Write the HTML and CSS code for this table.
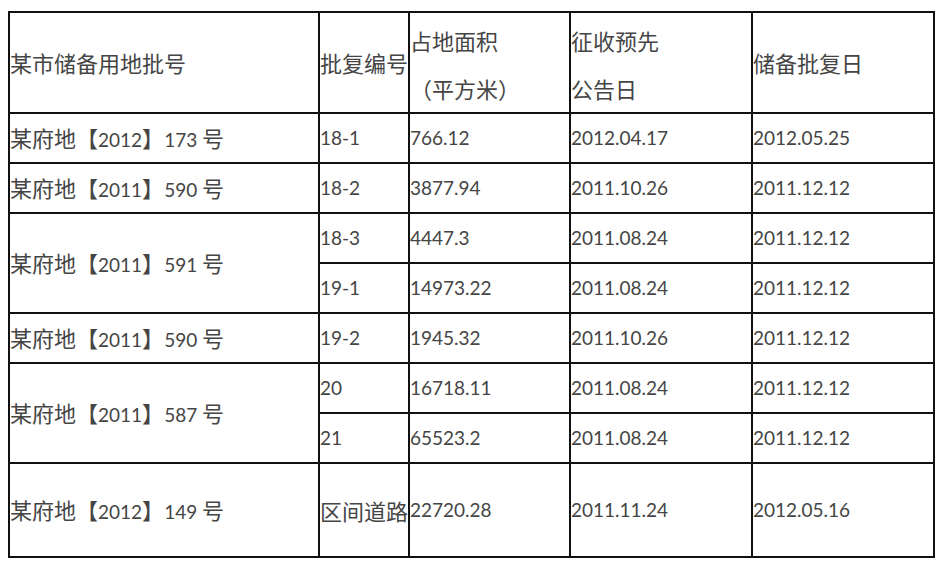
FILE: index.html
```html
<!DOCTYPE html>
<html lang="zh-CN">
<head>
<meta charset="utf-8">
<title>储备用地批复表</title>
<link rel="stylesheet" href="styles.css">
</head>
<body>
<table class="grid">
  <colgroup>
    <col class="c1"><col class="c2"><col class="c3"><col class="c4"><col class="c5">
  </colgroup>
  <tr class="head">
    <td>某市储备用地批号</td>
    <td>批复编号</td>
    <td class="two">占地面积<br>（平方米）</td>
    <td class="two">征收预先<br>公告日</td>
    <td>储备批复日</td>
  </tr>
  <tr class="r">
    <td>某府地【<span class="n">2012</span>】<span class="n">173 </span>号</td>
    <td class="num">18-1</td><td class="num">766.12</td><td class="num">2012.04.17</td><td class="num">2012.05.25</td>
  </tr>
  <tr class="r">
    <td>某府地【<span class="n">2011</span>】<span class="n">590 </span>号</td>
    <td class="num">18-2</td><td class="num">3877.94</td><td class="num">2011.10.26</td><td class="num">2011.12.12</td>
  </tr>
  <tr class="r">
    <td rowspan="2">某府地【<span class="n">2011</span>】<span class="n">591 </span>号</td>
    <td class="num">18-3</td><td class="num">4447.3</td><td class="num">2011.08.24</td><td class="num">2011.12.12</td>
  </tr>
  <tr class="r">
    <td class="num">19-1</td><td class="num">14973.22</td><td class="num">2011.08.24</td><td class="num">2011.12.12</td>
  </tr>
  <tr class="r">
    <td>某府地【<span class="n">2011</span>】<span class="n">590 </span>号</td>
    <td class="num">19-2</td><td class="num">1945.32</td><td class="num">2011.10.26</td><td class="num">2011.12.12</td>
  </tr>
  <tr class="r">
    <td rowspan="2">某府地【<span class="n">2011</span>】<span class="n">587 </span>号</td>
    <td class="num">20</td><td class="num">16718.11</td><td class="num">2011.08.24</td><td class="num">2011.12.12</td>
  </tr>
  <tr class="r">
    <td class="num">21</td><td class="num">65523.2</td><td class="num">2011.08.24</td><td class="num">2011.12.12</td>
  </tr>
  <tr class="last">
    <td>某府地【<span class="n">2012</span>】<span class="n">149 </span>号</td>
    <td>区间道路</td><td class="num">22720.28</td><td class="num">2011.11.24</td><td class="num">2012.05.16</td>
  </tr>
</table>
</body>
</html>
```
FILE: styles.css
```css
html, body {
  margin: 0;
  padding: 0;
  background: #fff;
}

body {
  padding: 11px 0 0 8px;
}

.grid {
  border-collapse: collapse;
  table-layout: fixed;
  width: 925px;
  color: #454545;
  font-family: "Noto Sans CJK SC", "Noto Sans", sans-serif;
  font-size: 22px;
}

.c1 { width: 310px; }
.c2 { width: 90px; }
.c3 { width: 161px; }
.c4 { width: 182px; }
.c5 { width: 182px; }

.grid td {
  border: 2px solid #111;
  padding: 0;
  vertical-align: middle;
  text-align: left;
  white-space: nowrap;
  line-height: 1.2;
}

.head td { height: 97px; }
.r td { height: 48px; }
.last td { height: 92px; }

.grid td.two {
  line-height: 48px;
  padding-top: 2px;
}

.n,
.grid td.num {
  font-family: Lato, "Noto Sans CJK SC", sans-serif;
  font-size: 19px;
}
```
